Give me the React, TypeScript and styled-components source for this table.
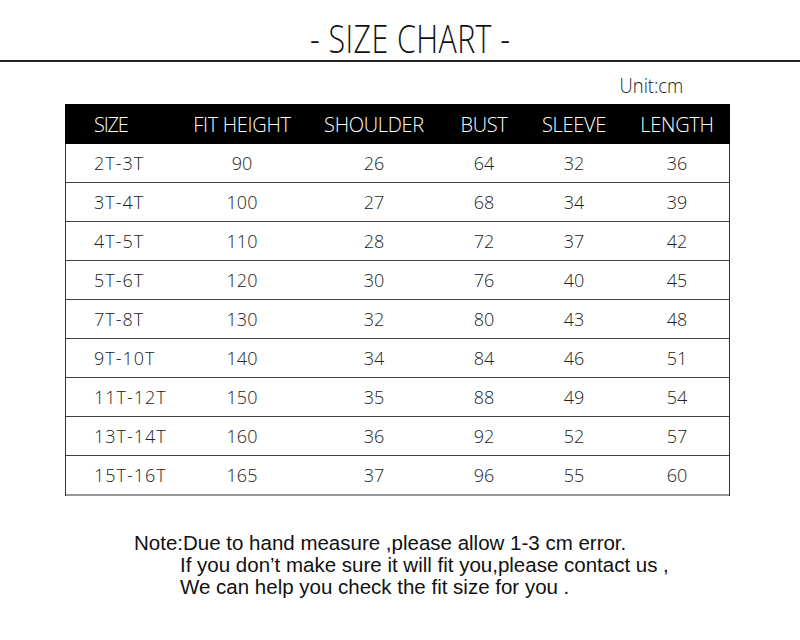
import styled, { createGlobalStyle } from 'styled-components';

const GlobalStyle = createGlobalStyle`
  html, body {
    margin: 0;
    padding: 0;
    background: #fff;
  }
`;

const columns = ['SIZE', 'FIT HEIGHT', 'SHOULDER', 'BUST', 'SLEEVE', 'LENGTH'];

const rows = [
  ['2T-3T', '90', '26', '64', '32', '36'],
  ['3T-4T', '100', '27', '68', '34', '39'],
  ['4T-5T', '110', '28', '72', '37', '42'],
  ['5T-6T', '120', '30', '76', '40', '45'],
  ['7T-8T', '130', '32', '80', '43', '48'],
  ['9T-10T', '140', '34', '84', '46', '51'],
  ['11T-12T', '150', '35', '88', '49', '54'],
  ['13T-14T', '160', '36', '92', '52', '57'],
  ['15T-16T', '165', '37', '96', '55', '60'],
];

export default function App() {
  return (
    <Page>
      <GlobalStyle />
      <TitleBar>
        <Title>- SIZE CHART -</Title>
      </TitleBar>
      <UnitRow>
        <Unit>Unit:cm</Unit>
      </UnitRow>
      <Table>
        <HeaderRow>
          {columns.map((c, i) => (
            <HeadCell key={c} first={i === 0}>{c}</HeadCell>
          ))}
        </HeaderRow>
        {rows.map((r, ri) => (
          <Row key={r[0]} last={ri === rows.length - 1}>
            {r.map((v, i) => (
              <Cell key={i} first={i === 0}>{v}</Cell>
            ))}
          </Row>
        ))}
      </Table>
      <Note>
        <NoteLine>Note:Due to hand measure ,please allow 1-3 cm error.</NoteLine>
        <NoteLine indent>If you don’t make sure it will fit you,please contact us ,</NoteLine>
        <NoteLine indent>We can help you check the fit size for you .</NoteLine>
      </Note>
    </Page>
  );
}

const Page = styled.div`
  width: 800px;
  height: 640px;
  background: #fff;
  overflow: hidden;
`;

const TitleBar = styled.div`
  display: flex;
  justify-content: center;
  padding: 16px 0 0 20px;
  height: 44px;
  border-bottom: 2px solid #222;
`;

const Title = styled.div`
  font-family: 'Open Sans', sans-serif;
  font-weight: 300;
  font-size: 38px;
  line-height: 44px;
  color: #111;
  transform: scaleX(0.8);
  letter-spacing: 0.5px;
`;

const UnitRow = styled.div`
  display: flex;
  justify-content: flex-end;
  padding: 11px 117px 0 0;
  height: 31px;
`;

const Unit = styled.div`
  font-family: 'Open Sans', sans-serif;
  font-weight: 300;
  font-size: 20px;
  line-height: 26px;
  color: #222;
  transform: scaleX(0.92);
  transform-origin: right center;
`;

const grid = '115px 122px 142px 78px 102px 104px';

const Table = styled.div`
  margin-left: 65px;
  width: 663px;
  border-left: 1px solid #333;
  border-right: 1px solid #333;
`;

const HeaderRow = styled.div`
  display: grid;
  grid-template-columns: ${grid};
  height: 40px;
  background: #000;
  margin: 0 -1px;
  padding: 0 1px;
`;

const HeadCell = styled.div<{ first?: boolean }>`
  display: flex;
  align-items: center;
  justify-content: ${(p) => (p.first ? 'flex-start' : 'center')};
  padding-left: ${(p) => (p.first ? '28px' : '0')};
  font-family: 'Open Sans', sans-serif;
  font-weight: 300;
  font-size: 20px;
  color: #fff;
  white-space: nowrap;
  letter-spacing: ${(p) => (p.first ? '-1.2px' : '-0.3px')};
`;

const Row = styled.div<{ last?: boolean }>`
  display: grid;
  grid-template-columns: ${grid};
  height: 38px;
  border-bottom: ${(p) => (p.last ? '2px solid #999' : '1px solid #444')};
`;

const Cell = styled.div<{ first?: boolean }>`
  display: flex;
  align-items: center;
  justify-content: ${(p) => (p.first ? 'flex-start' : 'center')};
  padding-left: ${(p) => (p.first ? '28px' : '0')};
  font-family: 'Open Sans', sans-serif;
  font-weight: 300;
  font-size: 18px;
  color: #222;
  letter-spacing: ${(p) => (p.first ? '1px' : '0')};
  white-space: nowrap;
`;

const Note = styled.div`
  padding: 36px 0 0 134px;
  font-family: 'Liberation Sans', Arial, sans-serif;
  font-size: 20.5px;
  line-height: 22px;
  color: #111;
`;

const NoteLine = styled.div<{ indent?: boolean }>`
  padding-left: ${(p) => (p.indent ? '46px' : '0')};
  white-space: nowrap;
`;
